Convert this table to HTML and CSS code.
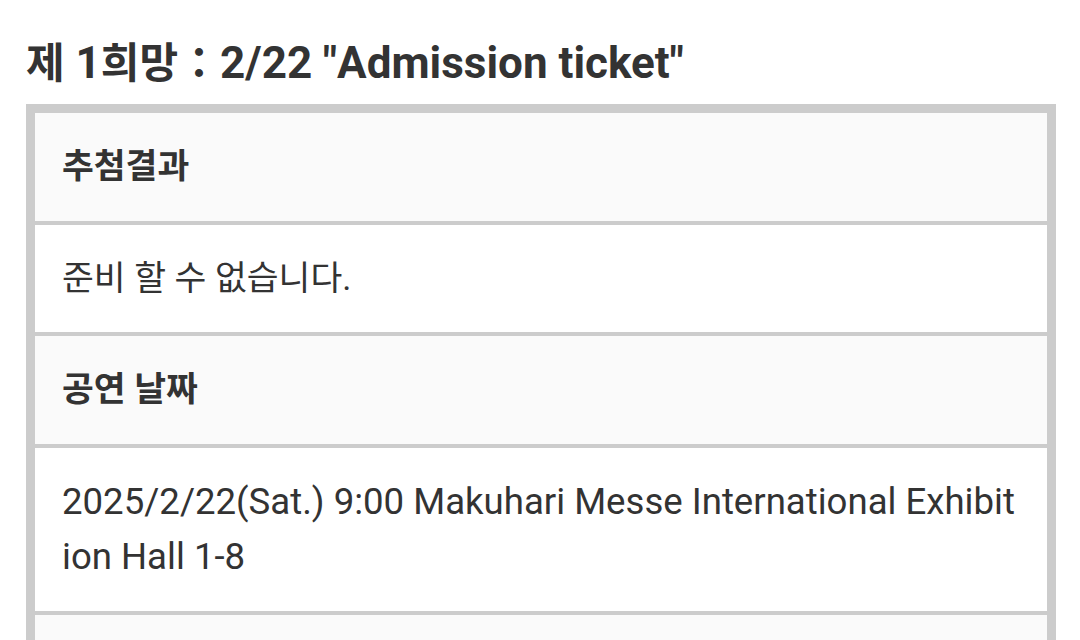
FILE: index.html
```html
<!DOCTYPE html>
<html lang="ko">
<head>
<meta charset="utf-8">
<link rel="stylesheet" href="styles.css">
</head>
<body>
<h1 class="title"><span class="ko">제</span> 1<span class="ko">희망：</span>2/22 "Admission ticket"</h1>
<div class="info">
  <div class="row head ko">추첨결과</div>
  <div class="row ko">준비 할 수 없습니다.</div>
  <div class="row head ko">공연 날짜</div>
  <div class="row">2025/2/22(Sat.) 9:00 Makuhari Messe International Exhibition Hall 1-8</div>
  <div class="row head">&nbsp;</div>
</div>
</body>
</html>
```
FILE: styles.css
```css
html, body {
  margin: 0;
  background: #fff;
}
body {
  padding: 38px 24px 0 26px;
  font-family: Roboto, "Noto Sans CJK KR", sans-serif;
  color: #333;
}
.title {
  margin: 0 0 16px;
  font-size: 44px;
  line-height: 50px;
  font-weight: 700;
}
.title .ko {
  font-size: 42px;
  line-height: 40px;
}
.info {
  border: 9px solid #ccc;
}
.row {
  padding: 26px 27px;
  font-size: 36.6px;
  line-height: 55.5px;
  background: #fff;
  word-break: break-all;
}
.row.ko {
  font-size: 34.6px;
}
.row + .row {
  border-top: 4px solid #ccc;
}
.row.head {
  background: #fafafa;
  font-weight: 700;
}
```
